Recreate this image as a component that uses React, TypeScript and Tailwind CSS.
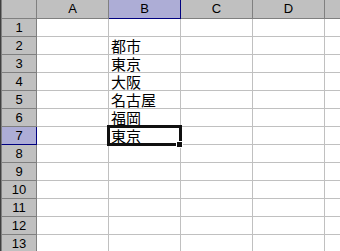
const COLS = ["A", "B", "C", "D"];
const ROWS = Array.from({ length: 13 }, (_, i) => i + 1);

const cells: Record<number, string> = {
  2: "都市",
  3: "東京",
  4: "大阪",
  5: "名古屋",
  6: "福岡",
  7: "東京",
};

const SEL_ROW = 7;
const SEL_COL = "B";

export default function App() {
  return (
    <div className="relative w-[340px] h-[251px] overflow-hidden bg-white border-l border-[#404040] font-['Liberation_Sans',Arial,sans-serif] text-[13px] text-black">
      {/* column headers */}
      <div className="flex h-[19px]">
        <div className="w-[36px] shrink-0 bg-[#c0c0c0] border-l border-r border-b border-[#808080]" />
        {COLS.map((c) => {
          const sel = c === SEL_COL;
          return (
            <div
              key={c}
              className={
                sel
                  ? "w-[72px] shrink-0 flex items-center justify-center bg-[#adadd6] border-r border-b border-[#000080]"
                  : "w-[72px] shrink-0 flex items-center justify-center bg-[#c0c0c0] border-r border-b border-[#808080]"
              }
            >
              {c}
            </div>
          );
        })}
        <div className="flex-1 bg-[#c0c0c0] border-b border-[#808080]" />
      </div>

      {/* rows */}
      {ROWS.map((r) => {
        const sel = r === SEL_ROW;
        return (
          <div key={r} className="flex h-[18px]">
            <div
              className={
                sel
                  ? "w-[36px] shrink-0 flex items-center justify-center bg-[#adadd6] border-l border-l-[#808080] border-r border-b border-[#000080]"
                  : "w-[36px] shrink-0 flex items-center justify-center bg-[#c0c0c0] border-l border-r border-b border-[#808080]"
              }
            >
              {r}
            </div>
            {COLS.map((c) => (
              <div
                key={c}
                className="w-[72px] shrink-0 flex items-end border-r border-b border-[#c0c0c0] pl-[2px] pb-[1px] font-['Noto_Sans_CJK_JP',sans-serif] text-[15px] leading-[15px] whitespace-nowrap"
              >
                {c === "B" ? cells[r] ?? "" : ""}
              </div>
            ))}
            <div className="flex-1 border-b border-[#c0c0c0]" />
          </div>
        );
      })}

      {/* active cell outline + fill handle */}
      <div className="absolute left-[106px] top-[125px] w-[75px] h-[21px] border-[3px] border-[#101010] pointer-events-none" />
      <div className="absolute left-[175px] top-[141px] w-[7px] h-[7px] bg-[#101010] border border-white pointer-events-none" />
    </div>
  );
}
